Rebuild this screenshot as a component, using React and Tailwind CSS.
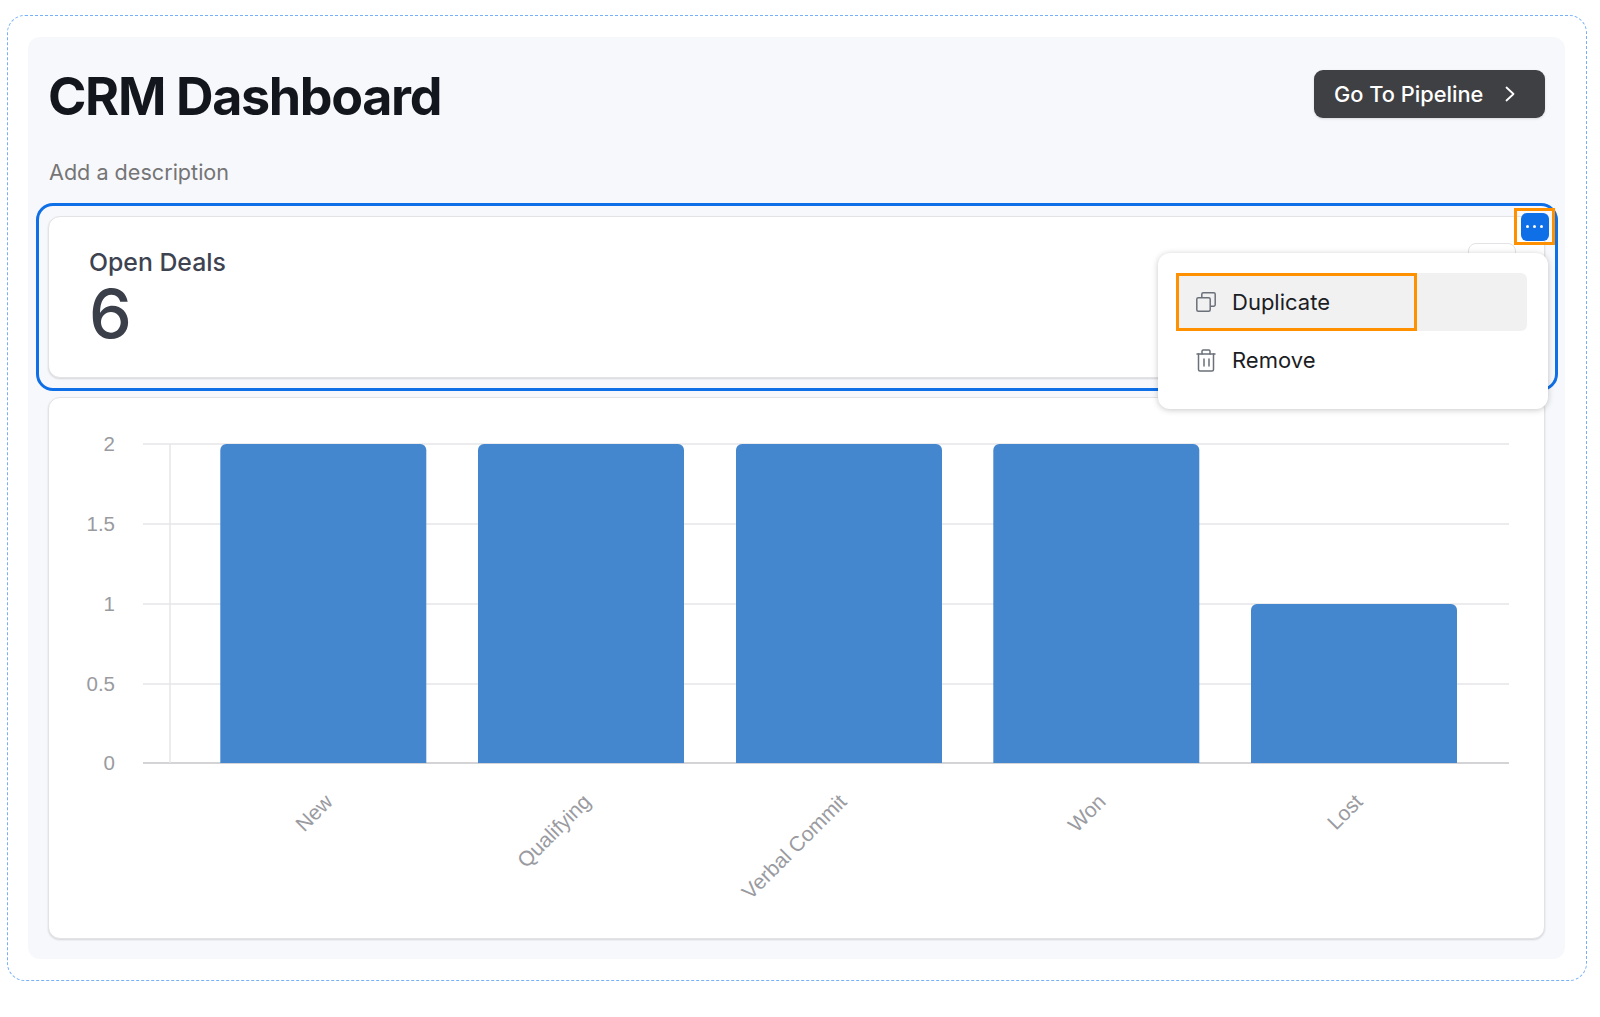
const bars = [
  { label: "New", x: 220.3, top: 444, end: 336 },
  { label: "Qualifying", x: 478, top: 444, end: 594 },
  { label: "Verbal Commit", x: 736, top: 444, end: 850 },
  { label: "Won", x: 993.3, top: 444, end: 1109 },
  { label: "Lost", x: 1251, top: 604, end: 1366 },
];

const ticks = [
  { label: "2", y: 444 },
  { label: "1.5", y: 524 },
  { label: "1", y: 604 },
  { label: "0.5", y: 684 },
  { label: "0", y: 763 },
];

// chart coords are page coords minus the card's top left corner
function Chart() {
  const ox = 49;
  const oy = 398;
  return (
    <svg width="1496" height="540" className="block" fontFamily="'Liberation Sans', Arial, sans-serif">
      {ticks.map((t) => (
        <g key={t.label}>
          <line x1={143 - ox} x2={1509 - ox} y1={t.y - oy} y2={t.y - oy} stroke={t.label === "0" ? "#d4d4d6" : "#e6e6e8"} strokeWidth={t.label === "0" ? 2 : 1.5} />
          <text x={115 - ox} y={t.y - oy + 7} textAnchor="end" fontSize="20.5" fill="#9a9ba1">
            {t.label}
          </text>
        </g>
      ))}
      <line x1={170 - ox} x2={170 - ox} y1={444 - oy} y2={763 - oy} stroke="#e6e6e8" strokeWidth="1.5" />
      {bars.map((b) => (
        <g key={b.label}>
          <path
            d={`M${b.x - ox} ${763 - oy}V${b.top - oy + 6}a6 6 0 0 1 6 -6H${b.x - ox + 200}a6 6 0 0 1 6 6V${763 - oy}Z`}
            fill="#4487ce"
          />
          <text
            textAnchor="end"
            fontSize="21"
            fill="#9a9ba1"
            transform={`translate(${b.end - ox - 2} ${803 - oy}) rotate(-45)`}
          >
            {b.label}
          </text>
        </g>
      ))}
    </svg>
  );
}

function CopyIcon() {
  return (
    <svg width="20" height="20" viewBox="0 0 20 20" fill="none" stroke="#6b7079" strokeWidth="1.5" strokeLinejoin="round">
      <rect x="0.8" y="5.8" width="13.4" height="13.4" rx="1.5" />
      <path d="M5.8 5.8V2.3a1.5 1.5 0 0 1 1.5 -1.5h10.4a1.5 1.5 0 0 1 1.5 1.5v10.4a1.5 1.5 0 0 1 -1.5 1.5h-3.5" />
    </svg>
  );
}

function TrashIcon() {
  return (
    <svg width="20" height="23" viewBox="0 0 20 23" fill="none" stroke="#6b7079" strokeWidth="1.5" strokeLinecap="round" strokeLinejoin="round">
      <path d="M1 5h18" />
      <path d="M6 5V2.2A1.2 1.2 0 0 1 7.2 1h5.6A1.2 1.2 0 0 1 14 2.2V5" />
      <path d="M2.5 5v15.5A1.5 1.5 0 0 0 4 22h12a1.5 1.5 0 0 0 1.5 -1.5V5" />
      <path d="M8 10v7M13 10v7" />
    </svg>
  );
}

export default function App() {
  return (
    <div className="h-[1017px] bg-white pl-[7px] pt-[15px] font-['Inter',sans-serif]">
      <div className="h-[966px] w-[1580px] rounded-[18px] border border-dashed border-[#76b0f8] pl-5 pt-[21px]">
        <div className="h-[922px] w-[1537px] rounded-xl bg-[#f7f8fc] px-5 pt-[33px]">
          <div className="flex h-12 items-center justify-between">
            <h1 className="mt-[6px] text-[52px] font-bold leading-none tracking-[-0.026em] text-[#14161d]">CRM Dashboard</h1>
            <button className="flex h-12 w-[231px] items-center justify-between rounded-[9px] bg-[#3f4044] pl-5 pr-[30px] text-[21.8px] font-medium text-white shadow-sm">
              Go To Pipeline
              <svg width="10" height="16" viewBox="0 0 10 16" fill="none" stroke="white" strokeWidth="1.8" strokeLinecap="round" strokeLinejoin="round">
                <path d="M1.5 1.5L8.5 8l-7 6.5" />
              </svg>
            </button>
          </div>
          <p className="ml-px mt-10 text-[21.6px] leading-7 text-[#757575]">Add a description</p>

          <div className="relative mt-[30px] h-[162px] rounded-xl border border-[#e3e3e6] bg-white pl-10 pt-[29px] shadow-[0_1px_2px_rgba(0,0,0,0.14)]">
            <div className="absolute -bottom-[14px] -left-[13px] -right-[14px] -top-[14px] rounded-[17px] border-[3px] border-[#0f6fe6]" />
            <p className="text-[24.8px] font-medium leading-8 text-[#3d4350]">Open Deals</p>
            <p className="mt-[3px] text-[68px] font-medium leading-[64px] text-[#3a3f4a]">6</p>

            <div className="absolute right-[28px] top-[26px] h-10 w-[48px] rounded-lg border border-[#e3e3e6] bg-white" />

            <div className="absolute -right-[11px] -top-[9px] flex h-[37px] w-[41px] items-center justify-center border-[3px] border-[#ff9100]">
              <div className="flex h-[28px] w-[28px] items-center justify-center gap-[4px] rounded-md bg-[#0f6fe6]">
                <span className="h-[3px] w-[3px] rounded-full bg-white" />
                <span className="h-[3px] w-[3px] rounded-full bg-white" />
                <span className="h-[3px] w-[3px] rounded-full bg-white" />
              </div>
            </div>

            <div className="absolute -right-[4px] top-[36px] h-[156px] w-[390px] rounded-xl bg-white pl-[18px] pr-[21px] pt-5 shadow-[0_1px_6px_rgba(0,0,0,0.22)]">
              <div className="relative flex h-[58px] items-center gap-4 rounded-md bg-[#f1f1f2] pl-5 text-[22px] text-[#1b1d24]">
                <CopyIcon />
                Duplicate
                <div className="absolute inset-y-0 left-0 w-[241px] border-[3px] border-[#ff9100]" />
              </div>
              <div className="flex h-[58px] items-center gap-4 pl-5 text-[22px] text-[#1b1d24]">
                <TrashIcon />
                Remove
              </div>
            </div>
          </div>

          <div className="mt-[19px] h-[542px] rounded-xl border border-[#e3e3e6] bg-white shadow-[0_1px_2px_rgba(0,0,0,0.14)]">
            <Chart />
          </div>
        </div>
      </div>
    </div>
  );
}
